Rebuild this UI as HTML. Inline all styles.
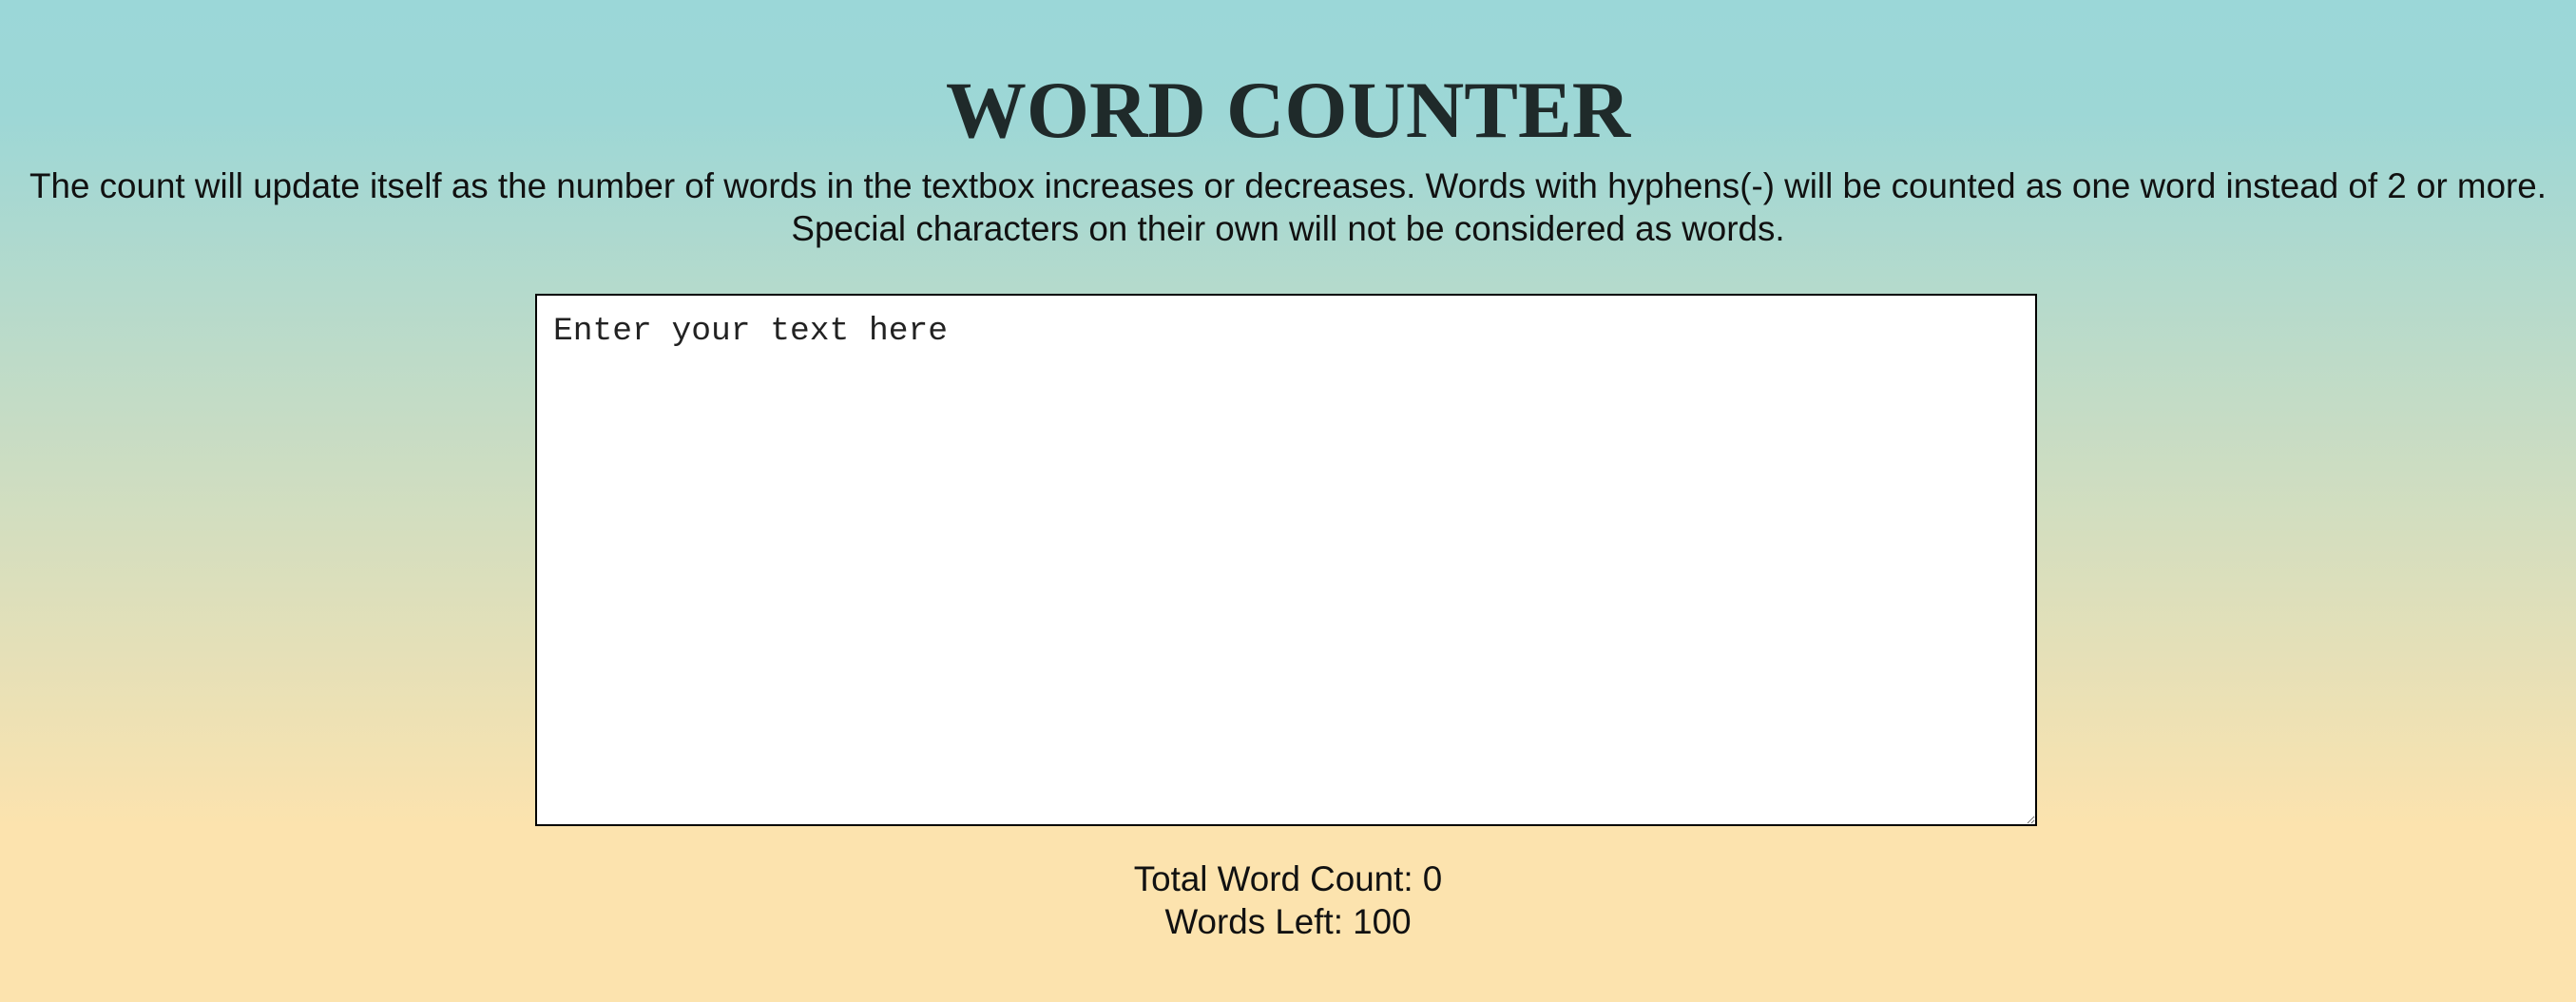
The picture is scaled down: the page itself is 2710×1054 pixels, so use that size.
<!DOCTYPE html>
<html><head><meta charset="utf-8"><style>
html,body{margin:0;padding:0;}
body{width:2710px;height:1054px;overflow:hidden;background:linear-gradient(180deg,#9bd7d8 0px,#9dd7d6 120px,#fce3ae 870px,#fce3ae 1054px);font-family:"Liberation Sans",Arial,sans-serif;color:#111;}
h1{position:absolute;left:0;width:2710px;top:66px;margin:0;text-align:center;font-family:"Liberation Serif",serif;font-weight:bold;font-size:85px;line-height:100px;color:#1f2a2a;}
p.d{position:absolute;left:0;width:2710px;top:173px;margin:0;text-align:center;font-size:36.8px;line-height:45px;}
textarea{position:absolute;left:563px;top:309px;width:1580px;height:560px;box-sizing:border-box;border:2px solid #000;background:#fff;padding:17px 17px;font-family:"Liberation Mono",monospace;font-size:34.6px;line-height:42px;color:#222;resize:both;outline:none;}
textarea::placeholder{color:#222;}
.c{position:absolute;left:0;width:2710px;top:902px;text-align:center;font-size:36.8px;line-height:45px;}
</style></head><body>
<h1>WORD COUNTER</h1>
<p class="d">The count will update itself as the number of words in the textbox increases or decreases. Words with hyphens(-) will be counted as one word instead of 2 or more.<br>Special characters on their own will not be considered as words.</p>
<textarea placeholder="Enter your text here"></textarea>
<div class="c">Total Word Count: 0<br>Words Left: 100</div>
</body></html>
